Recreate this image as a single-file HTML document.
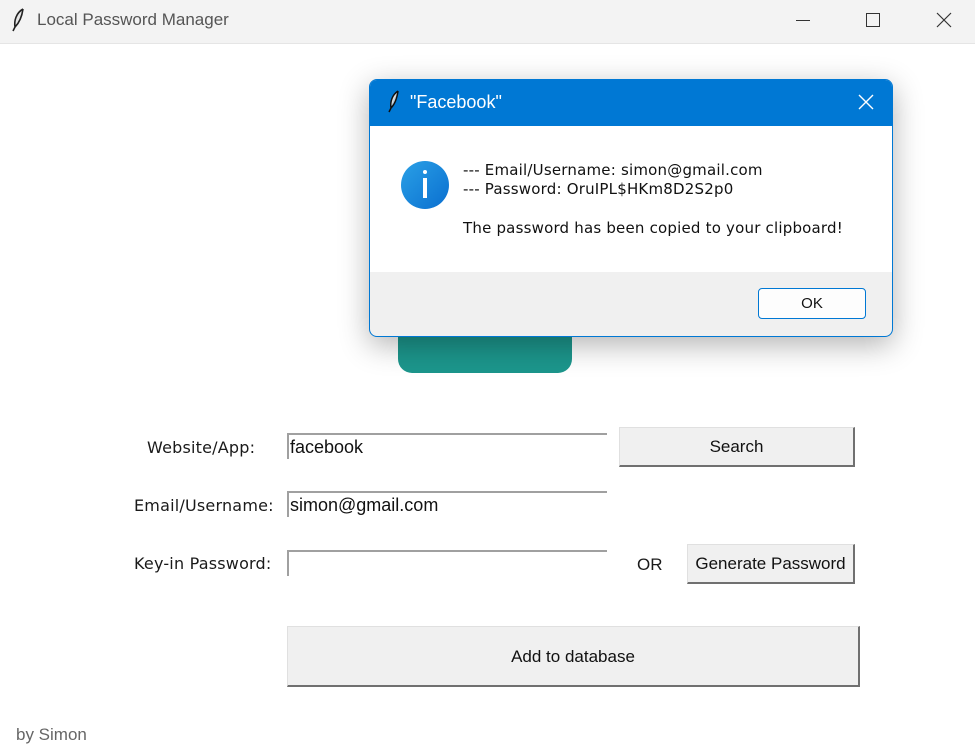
<!DOCTYPE html>
<html><head><style>
body{margin:0;width:975px;height:754px;background:#fff;position:relative;overflow:hidden;font-family:"Liberation Sans",sans-serif;}
.a{position:absolute;}
.t{font-size:16px;color:#1a1a1a;}
.l{font-family:"DejaVu Sans",sans-serif;font-size:16px;letter-spacing:0.2px}
.entry{position:absolute;height:26px;background:#fff;border-top:2px solid #a0a0a0;border-left:2px solid #a0a0a0;box-sizing:border-box;font-size:18px;padding-left:1px;line-height:24px;color:#111;}
.btn{position:absolute;background:#f0f0f0;border:1px solid #e0e0e0;border-right:2px solid #707070;border-bottom:2px solid #707070;box-sizing:border-box;text-align:center;font-size:17px;color:#111;}
.d{font-family:"DejaVu Sans",sans-serif;font-size:15px;letter-spacing:0.2px;color:#111;}
</style></head><body>
<div class="a" style="left:0;top:0;width:975px;height:43px;background:#f3f3f3;border-bottom:1px solid #e5e5e5"></div>
<svg class="a" style="left:10px;top:8px" width="18" height="24" viewBox="0 0 18 24"><path d="M13 1 C6 5 4 13 5 19 L3 23 M13 1 C12 8 10 14 5 19" stroke="#222" stroke-width="1.6" fill="#e6e6e6"/></svg>
<div class="a t" style="left:37px;top:10px;color:#555;font-size:17px">Local Password Manager</div>
<div class="a" style="left:796px;top:20px;width:14px;height:1px;background:#333"></div>
<div class="a" style="left:866px;top:13px;width:12px;height:12px;border:1px solid #333"></div>
<svg class="a" style="left:936px;top:12px" width="16" height="16"><path d="M1 1L15 15M15 1L1 15" stroke="#333" stroke-width="1.2"/></svg>

<div class="a" style="left:398px;top:320px;width:174px;height:53px;background:#1c968c;border-radius:0 0 14px 14px"></div>

<div class="a t l" style="left:147px;top:438px">Website/App:</div>
<div class="a t l" style="left:134px;top:496px">Email/Username:</div>
<div class="a t l" style="left:134px;top:554px">Key-in Password:</div>
<div class="entry" style="left:287px;top:433px;width:320px">facebook</div>
<div class="entry" style="left:287px;top:491px;width:320px">simon@gmail.com</div>
<div class="entry" style="left:287px;top:550px;width:320px"></div>
<div class="btn" style="left:619px;top:427px;width:236px;height:40px;line-height:38px">Search</div>
<div class="a t" style="left:637px;top:555px;font-size:17px">OR</div>
<div class="btn" style="left:687px;top:544px;width:168px;height:40px;line-height:38px">Generate Password</div>
<div class="btn" style="left:287px;top:626px;width:573px;height:61px;line-height:60px">Add to database</div>
<div class="a t" style="left:16px;top:725px;color:#666;font-size:17px">by Simon</div>

<div class="a" style="left:369px;top:79px;width:524px;height:258px;border:1px solid #0078d4;border-radius:8px;box-shadow:0 8px 30px rgba(0,0,0,.3);overflow:hidden;background:#f0f0f0;box-sizing:border-box">
 <div class="a" style="left:0;top:0;width:100%;height:46px;background:#0078d4"></div>
 <svg class="a" style="left:17px;top:10px" width="14" height="24" viewBox="0 0 14 24"><path d="M11 1 C5 5 3 12 4 18 L2 22 M11 1 C10 8 8 14 4 18" stroke="#111" stroke-width="1.5" fill="#ddd"/></svg>
 <div class="a" style="left:40px;top:12px;color:#fff;font-size:18px">"Facebook"</div>
 <svg class="a" style="left:488px;top:14px" width="16" height="16"><path d="M1 1L15 15M15 1L1 15" stroke="#fff" stroke-width="1.4"/></svg>
 <div class="a" style="left:0;top:46px;width:100%;height:146px;background:#fff"></div>
 <div class="a" style="left:31px;top:81px;width:48px;height:48px;border-radius:50%;background:linear-gradient(135deg,#2aa0e6,#0a6fd0)"></div>
 <div class="a" style="left:53px;top:90px;width:4px;height:4px;background:#fff;border-radius:2px"></div>
 <div class="a" style="left:53px;top:98px;width:4px;height:20px;background:#fff"></div>
 <div class="a d" style="left:93px;top:81px;line-height:19px">--- Email/Username: simon@gmail.com<br>--- Password: OruIPL$HKm8D2S2p0</div>
 <div class="a d" style="left:93px;top:139px">The password has been copied to your clipboard!</div>
 <div class="a" style="left:388px;top:208px;width:108px;height:31px;border:1px solid #0078d4;border-radius:4px;background:#fdfdfd;box-sizing:border-box;text-align:center;line-height:29px;font-size:15px;color:#111">OK</div>
</div>
</body></html>
